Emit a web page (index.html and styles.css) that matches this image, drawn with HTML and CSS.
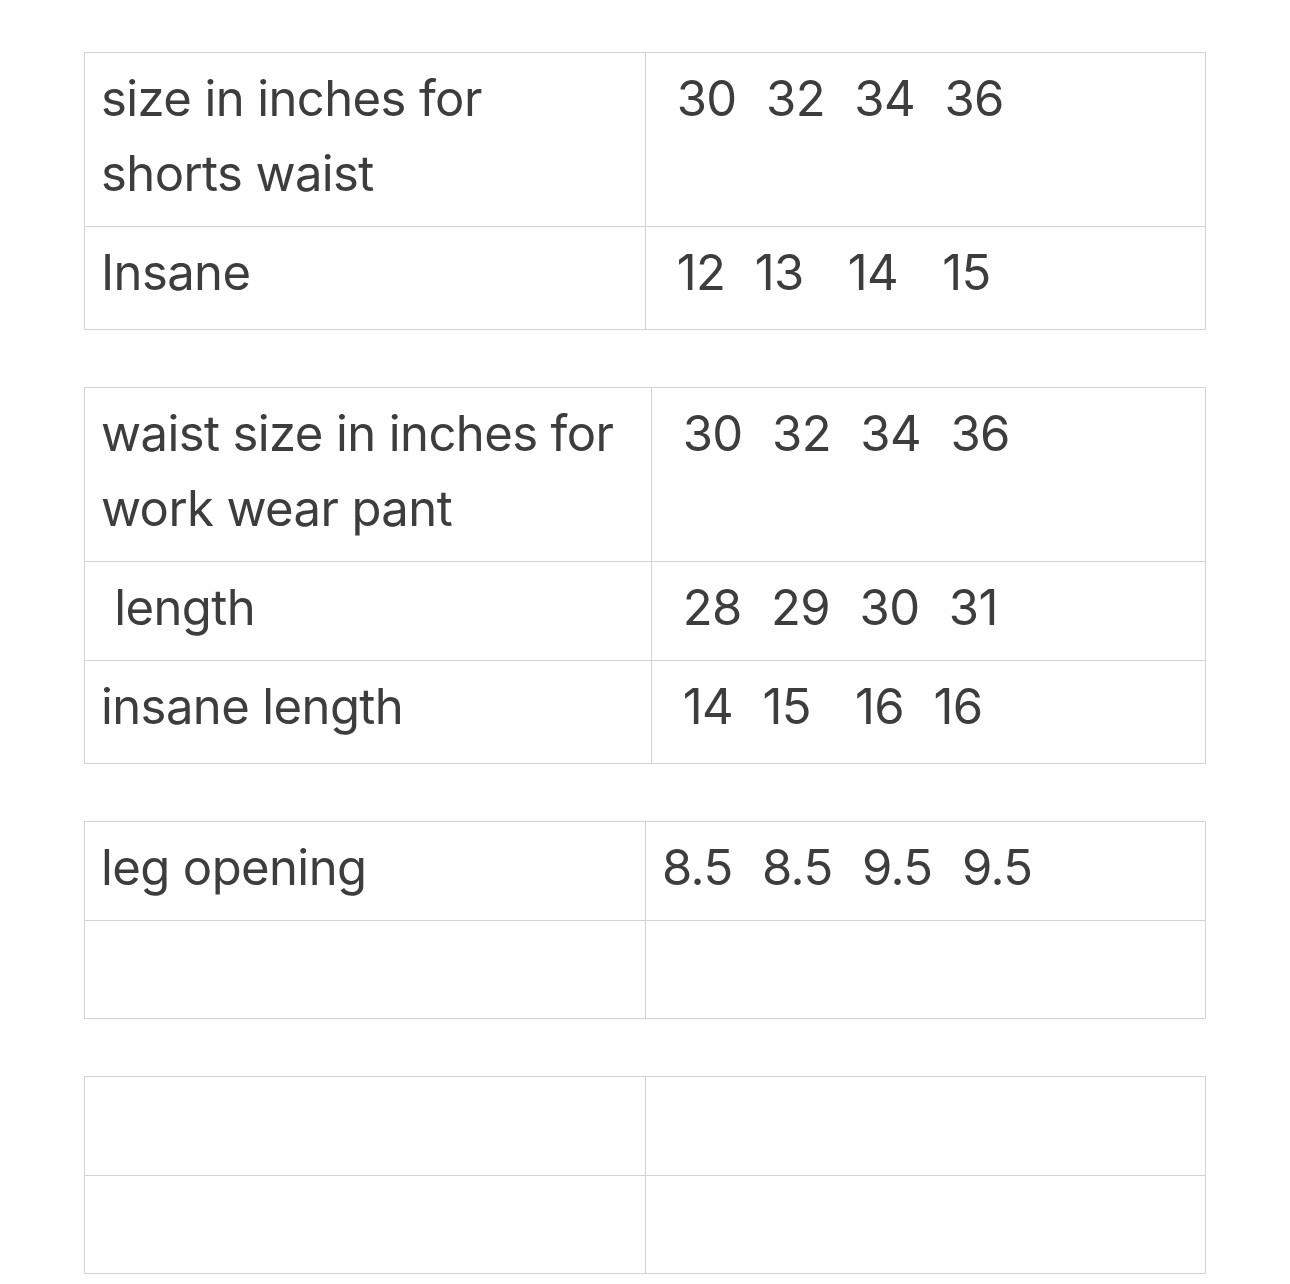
FILE: index.html
```html
<!DOCTYPE html>
<html lang="en">
<head>
<meta charset="utf-8">
<title>Size chart</title>
<link rel="stylesheet" href="styles.css">
</head>
<body>
<main class="page">
  <table class="grid">
    <colgroup><col class="c-a"><col class="c-b"></colgroup>
    <tr><td>size in inches for shorts waist</td><td class="val"> 30  32  34  36</td></tr>
    <tr class="tall"><td>Insane</td><td class="val"> 12  13   14   15</td></tr>
  </table>
  <table class="grid">
    <colgroup><col class="c-a wide"><col class="c-b"></colgroup>
    <tr><td>waist size in inches for work wear pant</td><td class="val"> 30  32  34  36</td></tr>
    <tr><td> length</td><td class="val"> 28  29  30  31</td></tr>
    <tr class="tall"><td>insane length</td><td class="val"> 14  15   16  16</td></tr>
  </table>
  <table class="grid">
    <colgroup><col class="c-a"><col class="c-b"></colgroup>
    <tr><td>leg opening</td><td class="val">8.5  8.5  9.5  9.5</td></tr>
    <tr class="short"><td></td><td></td></tr>
  </table>
  <table class="grid">
    <colgroup><col class="c-a"><col class="c-b"></colgroup>
    <tr><td></td><td></td></tr>
    <tr class="short"><td></td><td></td></tr>
  </table>
</main>
</body>
</html>
```

FILE: styles.css
```css
html, body {
  margin: 0;
  padding: 0;
  background: #ffffff;
}
body {
  font-family: Inter, "Noto Sans", "Liberation Sans", sans-serif;
  color: #3d3d3d;
}
.page {
  display: flex;
  flex-direction: column;
  gap: 57px;
  padding: 52px 0 0 84px;
}
.grid {
  width: 1122px;
  border-collapse: collapse;
  table-layout: fixed;
}
.c-a { width: 561px; }
.c-a.wide { width: 567px; }
.grid td {
  border: 1px solid #d3d3d3;
  padding: 8px 16px 15px;
  font-size: 49px;
  line-height: 75px;
  height: 75px;
  vertical-align: top;
  white-space: pre-wrap;
  letter-spacing: -0.6px;
}
.grid td.val {
  word-spacing: 1.5px;
}
.grid .tall td {
  padding-bottom: 19px;
}
.grid .short td {
  padding-bottom: 14px;
}
```
